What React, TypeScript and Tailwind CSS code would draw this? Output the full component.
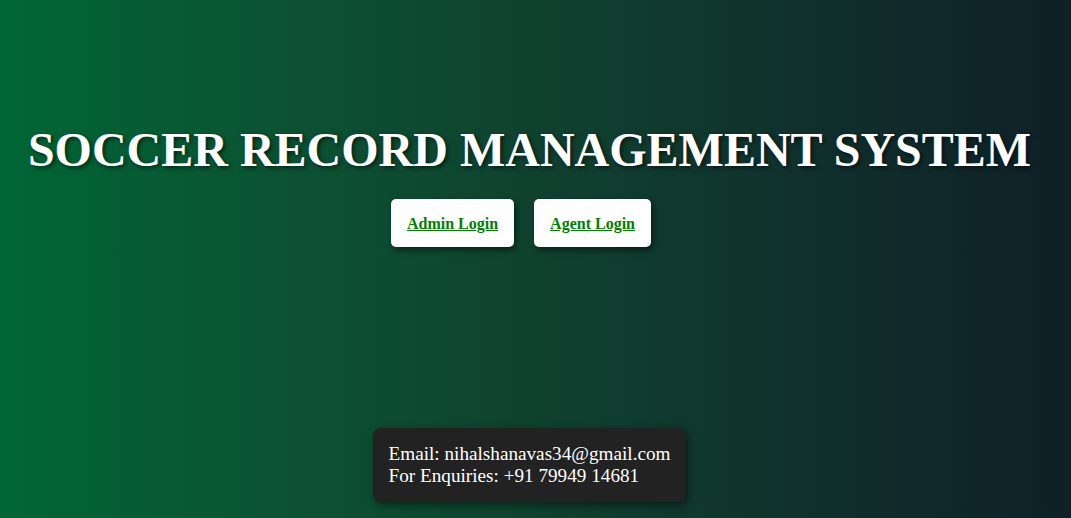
export default function App() {
  return (
    <div
      className="h-[518px] w-full overflow-hidden bg-gradient-to-r from-[#006634] to-[#0f2027] flex flex-col items-center pr-[12px]"
      style={{ fontFamily: '"Liberation Serif", "Times New Roman", serif' }}
    >
      <h1 className="mt-[121px] text-[48px] leading-[58px] font-bold text-white [text-shadow:2px_2px_4px_rgba(0,0,0,0.6)] whitespace-nowrap">
        SOCCER RECORD MANAGEMENT SYSTEM
      </h1>
      <div className="mt-[20px] flex gap-5 pr-[17px]">
        <a className="block bg-white rounded-[5px] px-4 h-12 pt-[2px] leading-[46px] text-[16px] font-bold text-[#008000] underline shadow-[2px_3px_6px_rgba(0,0,0,0.5)]">
          Admin Login
        </a>
        <a className="block bg-white rounded-[5px] px-4 h-12 pt-[2px] leading-[46px] text-[16px] font-bold text-[#008000] underline shadow-[2px_3px_6px_rgba(0,0,0,0.5)]">
          Agent Login
        </a>
      </div>
      <div className="mt-[181px] bg-[#222222] rounded-lg px-4 py-[15px] text-white text-[19.2px] leading-[22px] shadow-[2px_3px_8px_rgba(0,0,0,0.5)]">
        <div>Email: nihalshanavas34@gmail.com</div>
        <div>For Enquiries: +91 79949 14681</div>
      </div>
    </div>
  );
}
